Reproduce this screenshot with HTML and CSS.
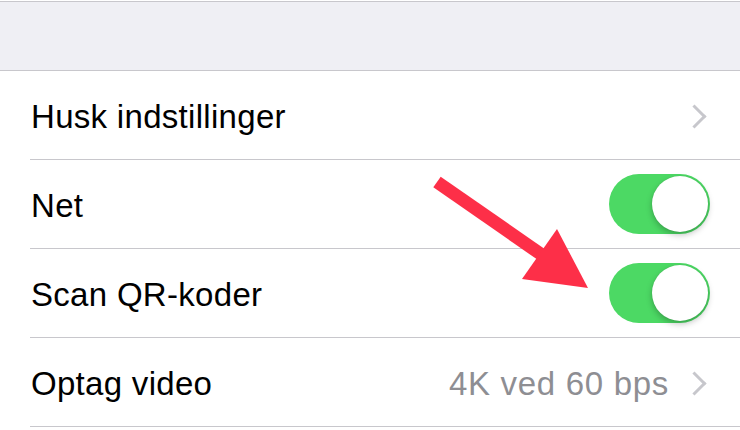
FILE: index.html
```html
<!DOCTYPE html>
<html lang="da">
<head>
  <meta charset="UTF-8" />
  <meta name="viewport" content="width=device-width, initial-scale=1.0"/>
  <title>Kamera</title>
  <link rel="stylesheet" href="styles.css">
</head>
<body>
  <div class="top-band"></div>

  <div class="list">
    <div class="row">
      <span class="label">Husk indstillinger</span>
      <span class="chevron"></span>
    </div>
    <div class="row">
      <span class="label">Net</span>
      <span class="switch on"><span class="knob"></span></span>
    </div>
    <div class="row">
      <span class="label">Scan QR-koder</span>
      <span class="switch on"><span class="knob"></span></span>
    </div>
    <div class="row">
      <span class="label">Optag video</span>
      <span class="value">4K ved 60 bps</span>
      <span class="chevron"></span>
    </div>
  </div>

  <!-- red annotation arrow pointing at the QR toggle -->
  <svg class="arrow" width="740" height="430" viewBox="0 0 740 430">
    <line x1="437" y1="182" x2="545" y2="257" stroke="#fd2f48" stroke-width="13" />
    <polygon points="557,229 522,279 588,288" fill="#fd2f48" />
  </svg>
</body>
</html>
```

FILE: styles.css
```css
body {
  margin: 0;
  font-family: 'Liberation Sans', Arial, sans-serif;
  background: #fff;
  color: #000;
  overflow: hidden;
  position: relative;
  height: 430px;
}

.top-band {
  height: 68px;
  margin-top: 1px;
  background: #efeff4;
  border-top: 1px solid #c8c7cc;
  border-bottom: 1px solid #c8c7cc;
}

.list {
  padding-left: 30px;
}

.row {
  height: 88px;
  display: flex;
  align-items: center;
  border-bottom: 1px solid #c8c7cc;
  padding-right: 30px;
}

.label {
  flex: 1;
  font-size: 33px;
  letter-spacing: 0.3px;
  margin-left: 1px;
  padding-top: 4px;
}

.value {
  font-size: 33px;
  color: #8e8e93;
  letter-spacing: 0.7px;
  margin-right: 17px;
  padding-top: 4px;
}

.chevron {
  width: 14px;
  height: 14px;
  border-top: 3px solid #c7c7cc;
  border-right: 3px solid #c7c7cc;
  transform: rotate(45deg);
  margin-right: 7px;
  margin-top: 2px;
}

.switch {
  width: 101px;
  height: 60px;
  border-radius: 30px;
  background: #4cd964;
  position: relative;
}

.switch .knob {
  position: absolute;
  top: 2px;
  right: 2px;
  width: 56px;
  height: 56px;
  border-radius: 50%;
  background: #fff;
  box-shadow: 0 3px 6px rgba(0, 0, 0, 0.25), 0 0 1px rgba(0, 0, 0, 0.15);
}

.arrow {
  position: absolute;
  top: 0;
  left: 0;
  pointer-events: none;
}
```
